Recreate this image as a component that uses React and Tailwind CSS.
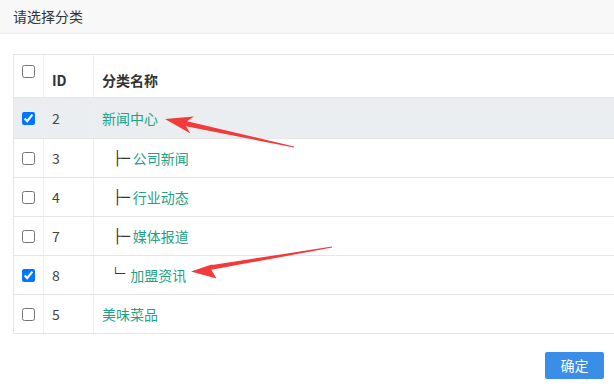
import React from 'react';

const rows = [
  { id: 2, name: '新闻中心', level: 0, checked: true, active: true },
  { id: 3, name: '公司新闻', level: 1, prefix: '├─' },
  { id: 4, name: '行业动态', level: 1, prefix: '├─' },
  { id: 7, name: '媒体报道', level: 1, prefix: '├─' },
  { id: 8, name: '加盟资讯', level: 1, prefix: '└─', last: true, checked: true },
  { id: 5, name: '美味菜品', level: 0 },
];

const Arrows = () => (
  <svg className="absolute inset-0 pointer-events-none" width="614" height="387" viewBox="0 0 614 387">
    {/* arrow to 新闻中心 */}
    <polygon
      fill="#f23a3a"
      points="165,119 194,116.5 187,121.3 294.1,146.5 293.9,147.6 186,126.2 190.5,133.5"
    />
    {/* arrow to 加盟资讯 */}
    <polygon
      fill="#f23a3a"
      points="191,271.5 214.5,263.5 210.5,265.3 331.9,246.6 332.1,247.6 211.3,269.8 216.5,278.5"
    />
  </svg>
);

const App = () => {
  return (
    <div
      className="relative w-[614px] h-[387px] overflow-hidden bg-white text-[#333]"
      style={{ fontFamily: '"Noto Sans CJK SC", "Noto Sans", sans-serif' }}
    >
      <div className="h-[34px] bg-[#f8f8f8] border-b border-[#eeeeee] px-[13px] flex items-center text-[14px]">
        请选择分类
      </div>

      <div className="pt-[20px] pl-[13px]">
        <div className="w-[620px] border-l border-t border-[#e6e6e6] text-[14px]">
          <div className="flex h-[43px] border-b border-[#e6e6e6] font-bold">
            <div className="w-[30px] border-r border-[#eeeeee] flex justify-center pt-[10px]">
              <input type="checkbox" readOnly className="w-[13px] h-[13px] m-0" />
            </div>
            <div className="w-[50px] border-r border-[#eeeeee] flex items-end pb-[6px] pl-[8px]">ID</div>
            <div className="flex-1 flex items-end pb-[6px] pl-[8px]">分类名称</div>
          </div>

          {rows.map((row, i) => (
            <div
              key={row.id}
              className={`flex border-b border-[#e6e6e6] ${i === 0 ? 'h-[41px]' : 'h-[39px]'} ${row.active ? 'bg-[#ebeef0]' : ''}`}
            >
              <div className="w-[30px] border-r border-[#eeeeee] flex items-center justify-center">
                <input type="checkbox" readOnly checked={!!row.checked} className="w-[13px] h-[13px] m-0" />
              </div>
              <div className="w-[50px] border-r border-[#eeeeee] flex items-center pl-[8px] text-[#444]">{row.id}</div>
              <div className="flex-1 flex items-center pl-[8px]">
                {row.level > 0 && (
                  <span
                    className={`text-[#333] ${row.last ? 'text-[11px] ml-[10px] mr-[5px] mt-[-1px]' : 'text-[14px] ml-[11px] mr-[3px]'}`}
                    style={{ fontFamily: '"DejaVu Sans Mono", monospace' }}
                  >
                    {row.prefix}
                  </span>
                )}
                <span className="text-[#1fa286]">{row.name}</span>
              </div>
            </div>
          ))}
        </div>
      </div>

      <div className="flex justify-end pr-[10px] mt-[18px]">
        <button className="w-[59px] h-[27px] bg-[#3a8ee8] text-white text-[14px] rounded-[2px] flex items-center justify-center">
          确定
        </button>
      </div>

      <Arrows />
    </div>
  );
};

export default App;
